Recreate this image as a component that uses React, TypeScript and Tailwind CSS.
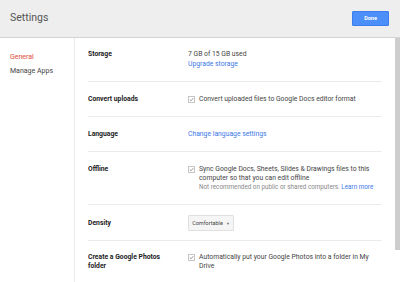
import React from 'react';

const Check: React.FC = () => (
    <span className="mt-[1px] flex h-[7px] w-[7px] shrink-0 items-center justify-center border border-[#c6c6c6] bg-white">
        <svg viewBox="0 0 10 10" className="h-[7px] w-[7px]">
            <path d="M1.5 5.2 L4 7.6 L8.6 2.2" fill="none" stroke="#666" strokeWidth="1.3" />
        </svg>
    </span>
);

const Row: React.FC<{ label: React.ReactNode; pad?: string; children: React.ReactNode; last?: boolean }> = ({ label, pad = 'pt-[13px] pb-[12px]', children, last }) => (
    <div className={`flex ${pad} ${last ? '' : 'border-b border-[#ebebeb]'}`}>
        <div className="w-[100px] shrink-0 font-bold text-[#222]">{label}</div>
        <div className="flex-1 min-w-0">{children}</div>
    </div>
);

const App: React.FC = () => {
    return (
        <div className="flex h-[282px] w-[400px] flex-col overflow-hidden bg-white text-[6.8px] leading-[9px] text-[#444]" style={{ fontFamily: 'Roboto, "Liberation Sans", sans-serif' }}>
            <div className="flex h-[38px] shrink-0 items-center justify-between border-b border-[#d4d4d4] bg-[#eeeeee] pl-[10px] pr-[11px]">
                <h1 className="text-[10.5px] leading-none text-[#555]">Settings</h1>
                <button className="h-[15px] w-[37px] rounded-[1px] border border-[#3b7ded] bg-[#4d8ff8] text-[5.5px] font-bold text-white">
                    Done
                </button>
            </div>

            <div className="flex flex-1 min-h-0">
                <div className="w-[75px] shrink-0 border-r border-[#ebebeb] pl-[10px] pt-[14px] text-[7px] leading-[10px]">
                    <div className="flex flex-col gap-[4px]">
                        <span className="text-[#dd4b39]">General</span>
                        <span className="text-[#444]">Manage Apps</span>
                    </div>
                </div>

                <div className="flex-1 min-w-0 px-[13px]">
                    <Row label="Storage" pad="pt-[11px] pb-[12px] leading-[10px]">
                        <div>7 GB of 15 GB used</div>
                        <div className="text-[#3b78e7]">Upgrade storage</div>
                    </Row>
                    <Row label="Convert uploads">
                        <div className="flex gap-[4px]">
                            <Check />
                            <span>Convert uploaded files to Google Docs editor format</span>
                        </div>
                    </Row>
                    <Row label="Language">
                        <span className="text-[#3b78e7]">Change language settings</span>
                    </Row>
                    <Row label="Offline">
                        <div className="flex gap-[4px]">
                            <Check />
                            <div>
                                <div>
                                    Sync Google Docs, Sheets, Slides &amp; Drawings files to this
                                    <br />
                                    computer so that you can edit offline
                                </div>
                                <div className="text-[6.3px] text-[#888]">
                                    Not recommended on public or shared computers. <span className="text-[#3b78e7]">Learn more</span>
                                </div>
                            </div>
                        </div>
                    </Row>
                    <Row label={<span className="flex h-[16px] items-center">Density</span>} pad="pt-[10px] pb-[9px]">
                        <div className="flex h-[16px] w-[46px] items-center justify-center gap-[3px] rounded-[1px] border border-[#e0e0e0] bg-[#f5f5f5] text-[5.5px] text-[#444]">
                            <span>Comfortable</span>
                            <span className="text-[4px] text-[#777]">▼</span>
                        </div>
                    </Row>
                    <Row label={<>Create a Google Photos<br />folder</>} pad="pt-[12px] pb-[12px]" last>
                        <div className="flex gap-[4px]">
                            <Check />
                            <span>
                                Automatically put your Google Photos into a folder in My
                                <br />
                                Drive
                            </span>
                        </div>
                    </Row>
                </div>

                <div className="h-[212px] w-[5px] shrink-0 bg-[#cdcdcd]" />
            </div>
        </div>
    );
};

export default App;
